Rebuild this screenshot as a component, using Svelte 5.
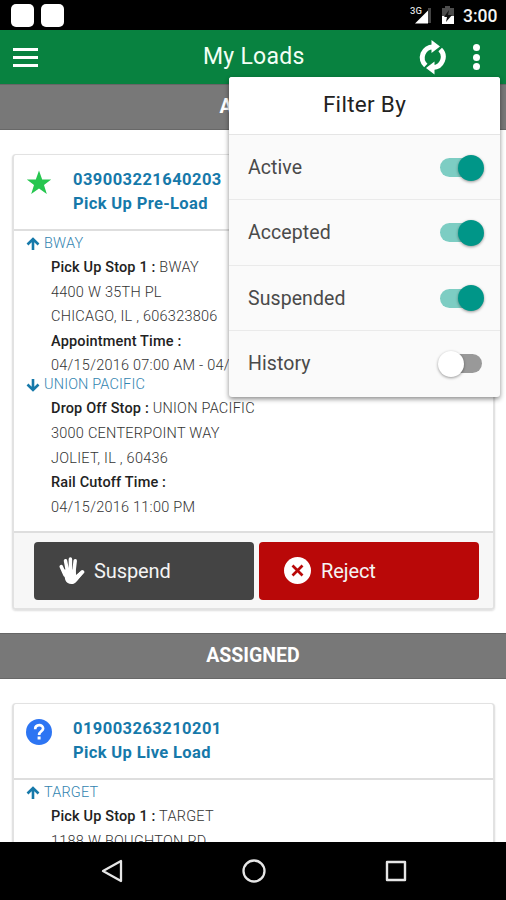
<script>
  const filters = [
    { label: 'Active', on: true },
    { label: 'Accepted', on: true },
    { label: 'Suspended', on: true },
    { label: 'History', on: false }
  ];
  const loads = [
    {
      section: 'ACTIVE', id: '039003221640203', kind: 'Pick Up Pre-Load', icon: 'star', actions: true,
      stops: [
        { dir: 'up', name: 'BWAY', lines: [['Pick Up Stop 1 :', 'BWAY'], ['', '4400 W 35TH PL'], ['', 'CHICAGO, IL , 606323806'], ['Appointment Time :', ''], ['', '04/15/2016 07:00 AM - 04/']] },
        { dir: 'down', name: 'UNION PACIFIC', lines: [['Drop Off Stop :', 'UNION PACIFIC'], ['', '3000 CENTERPOINT WAY'], ['', 'JOLIET, IL , 60436'], ['Rail Cutoff Time :', ''], ['', '04/15/2016 11:00 PM']] }
      ]
    },
    {
      section: 'ASSIGNED', id: '019003263210201', kind: 'Pick Up Live Load', icon: 'question', actions: false,
      stops: [
        { dir: 'up', name: 'TARGET', lines: [['Pick Up Stop 1 :', 'TARGET'], ['', '1188 W BOUGHTON RD']] }
      ]
    }
  ];
</script>

<div class="phone">
  <div class="status">
    <i class="notif"></i><i class="notif"></i>
    <svg class="signal" width="24" height="20" viewBox="0 0 24 20">
      <path d="M18 3h3v15h-3z" fill="#444" />
      <path d="M5 18.500 18 5.500v13z" fill="#fff" />
      <text x="0" y="8.500" font-size="9.500" font-weight="500" fill="#ddd">3G</text>
    </svg>
    <svg class="battery" width="14" height="20" viewBox="0 0 14 20">
      <path d="M1 3h3V1h5v2h4v8H1z" fill="#4d4d4d" />
      <path d="M1 11h12v8H1z" fill="#fff" />
      <path d="M8 5 3 12h3l-1 5 6-7H7z" fill="#111" />
    </svg>
    <span class="clock">3:00</span>
  </div>

  <header>
    <div class="burger"><i></i><i></i><i></i></div>
    <h1>My Loads</h1>
    <svg class="refresh" width="28" height="36" viewBox="0 0 28 36">
      <g fill="none" stroke="#fff" stroke-width="5">
        <path d="M6.800 26.500A10.600 10.600 0 0 1 14 8" />
        <path d="M21.200 10.500A10.600 10.600 0 0 1 14 28.500" />
      </g>
      <path d="M12.500 1 21 7.600 12.500 14z M15.500 22.500 7 29 15.500 35.500z" fill="#fff" />
    </svg>
    <div class="dots"><i></i><i></i><i></i></div>
  </header>

  <main>
    {#each loads as load}
      <h2>{load.section}</h2>
      <article>
        <div class="top">
          {#if load.icon === 'star'}
            <svg width="26" height="26" viewBox="0 0 26 26"><path d="M13 .5l3.200 9.100h9l-7.200 5.300 2.800 9.200L13 18.500l-7.800 5.600L8 14.900.8 9.600h9z" fill="#27c650" /></svg>
          {:else}
            <svg width="26" height="26" viewBox="0 0 26 26"><circle cx="13" cy="13" r="13" fill="#2d75f3" /><path d="M9.200 10.200C9.200 4.700 17.300 5 17.100 9.600 17 12.300 13.100 12.400 13.100 16" fill="none" stroke="#fff" stroke-width="2.700" /><path d="M11.600 17.500h3v3h-3z" fill="#fff" /></svg>
          {/if}
          <div class="title">
            <div class="num">{load.id}</div>
            <div class="kind">{load.kind}</div>
          </div>
        </div>
        <div class="body">
          {#each load.stops as stop}
            <div class="stop">
              <svg class:down={stop.dir === 'down'} width="14" height="14" viewBox="0 0 14 14"><path d="M7 13V3M1.500 7.500 7 2l5.500 5.500" fill="none" stroke="#1679aa" stroke-width="2.600" /></svg>
              <span>{stop.name}</span>
            </div>
            <div class="lines">
              {#each stop.lines as [strong, text]}
                <p>{#if strong}<b>{strong}</b>{/if}{#if strong && text}{' '}{/if}{text}</p>
              {/each}
            </div>
          {/each}
        </div>
        {#if load.actions}
          <div class="actions">
            <button class="suspend">
              <svg width="27" height="30" viewBox="0 0 27 30">
                <g fill="none" stroke="#fff" stroke-width="3.500" stroke-linecap="round"><path d="M3.200 10.500 7 19M7.500 4.700 9.800 17M12.400 3V17M17.200 4.800 15.800 17" /><path d="M24.300 16 18 23" stroke-width="4" /></g>
                <path d="M5 13.500h12.600l.5 5.500 4.100-3.500 2.500 2-5.700 7.500C16.500 29.500 9 29 7.300 24z" fill="#fff" />
              </svg>
              Suspend
            </button>
            <button class="reject">
              <svg width="27" height="27" viewBox="0 0 27 27"><circle cx="13.500" cy="13.500" r="13.500" fill="#fff" /><path d="m8.500 8.500 10 10m0-10-10 10" stroke="#b90808" stroke-width="2.700" /></svg>
              Reject
            </button>
          </div>
        {/if}
      </article>
    {/each}
  </main>

  <nav>
    <svg width="24" height="26" viewBox="0 0 24 26"><path d="M21 3v20L3 13z" fill="none" stroke="#e6e6e6" stroke-width="2.300" stroke-linejoin="round" /></svg>
    <svg width="26" height="26" viewBox="0 0 26 26"><circle cx="13" cy="13" r="10.500" fill="none" stroke="#e6e6e6" stroke-width="2.300" /></svg>
    <svg width="24" height="24" viewBox="0 0 24 24"><path d="M3 3h18v18H3z" fill="none" stroke="#e6e6e6" stroke-width="2.400" stroke-linejoin="round" /></svg>
  </nav>

  <div class="menu">
    <h3>Filter By</h3>
    {#each filters as f}
      <div class="row">
        <span>{f.label}</span>
        <div class="switch" class:on={f.on}><i></i></div>
      </div>
    {/each}
  </div>
</div>

<style>
  :global(body) { margin: 0; }
  * { box-sizing: border-box; }
  .phone { position: relative; width: 506px; height: 900px; overflow: hidden; display: flex; flex-direction: column; background: #fff; font-family: Roboto, sans-serif; color: #333; }
  .status { flex: none; height: 30px; background: #000; display: flex; align-items: center; padding-left: 11px; }
  .notif { width: 23px; height: 23px; border-radius: 5px; background: #fff; margin-right: 7px; }
  .signal { margin-left: auto; margin-right: 7px; overflow: visible; }
  .battery { margin-right: 8px; }
  .clock { width: 43px; color: #f4f4f4; font-size: 17.500px; font-weight: 500; line-height: 30px; padding-top: 2px; white-space: nowrap; }
  header { flex: none; height: 54px; background: #088240; display: flex; align-items: center; padding-left: 13px; }
  .burger { width: 25px; display: flex; flex-direction: column; gap: 5px; padding-top: 1px; }
  .burger i { height: 3px; background: #fff; }
  h1 { margin: 0 0 0 165px; width: 216px; color: #f2fff5; font-size: 23px; font-weight: 400; letter-spacing: .25px; line-height: 54px; }
  .refresh { margin-right: 26px; }
  .dots { display: flex; flex-direction: column; gap: 2.500px; }
  .dots i { width: 7px; height: 7px; border-radius: 50%; background: #fff; }
  main { height: 758px; flex: none; overflow: hidden; }
  h2 { margin: 0; height: 46px; background: #787878; border-top: 1px solid #666; border-bottom: 1px solid #686868; color: #fff; text-align: center; font-size: 19.500px; line-height: 44px; font-weight: 700; }
  article { margin: 24px 11px 23px 12px; border: 2px solid #e2e2e2; border-top-width: 1.500px; border-radius: 4px; box-shadow: 0 1px 2px #0002; overflow: hidden; }
  .top { height: 76px; border-bottom: 2px solid #dedede; padding: 13px 0 0 12px; display: flex; }
  .top svg { margin-top: 2px; }
  .title { margin-left: 21px; color: #1679aa; font-size: 16.500px; font-weight: 700; line-height: 24.300px; white-space: nowrap; }
  .num { letter-spacing: .45px; }
  .kind { letter-spacing: .36px; }
  .body { height: 299.500px; }
  .stop { display: flex; align-items: center; padding-left: 12px; height: 25px; color: #3284b0; font-size: 14.500px; font-weight: 300; letter-spacing: .15px; white-space: nowrap; }
  .stop svg { margin-right: 4px; }
  .stop svg.down { transform: rotate(180deg); }
  .lines { padding-left: 37px; margin-bottom: -6.500px; }
  p { margin: 0; height: 24.600px; line-height: 24.600px; font-size: 14.500px; font-weight: 300; letter-spacing: .24px; color: #333; white-space: nowrap; }
  b { font-weight: 500; color: #222; letter-spacing: .16px; }
  .actions { height: 77.500px; background: #f7f7f7; border-top: 2px solid #dedede; display: flex; gap: 5px; padding: 9px 14px 9px 20px; }
  button { border: 0; border-radius: 4px; width: 220px; height: 58px; padding: 0 0 0 24px; display: flex; align-items: center; font: 400 20px Roboto, sans-serif; color: #f4f4f4; letter-spacing: -.1px; }
  .suspend { background: #444; }
  .suspend svg { margin-right: 9px; }
  .reject { background: #b90808; }
  .reject svg { margin: 0 10px 0 1px; }
  nav { flex: none; height: 58px; background: #000; display: flex; align-items: center; padding: 0 0 0 100px; }
  nav svg:nth-child(2) { margin-left: 117px; }
  nav svg:nth-child(3) { margin-left: 117px; }
  .menu { position: absolute; left: 229px; top: 77px; width: 271px; height: 320px; background: #fafafa; border-radius: 3px; box-shadow: 0 2px 5px #0007; overflow: hidden; }
  h3 { margin: 0; height: 58px; background: #fff; border-bottom: 1px solid #e5e5e5; text-align: center; font-size: 22.500px; font-weight: 400; line-height: 54px; letter-spacing: .3px; color: #222; }
  .row { display: flex; align-items: center; justify-content: space-between; height: 65.300px; padding: 1px 16px 0 19px; border-bottom: 1px solid #eaeaea; font-size: 19.500px; color: #4a4a4a; letter-spacing: .08px; }
  .row:last-child { border-bottom: 0; padding-top: 0; }
  .switch { position: relative; width: 46px; height: 26px; display: flex; align-items: center; }
  .switch::before { content: ''; width: 42px; height: 19px; margin-left: 2px; border-radius: 10px; background: #999; }
  .switch i { position: absolute; left: 0; top: 0; width: 26px; height: 26px; border-radius: 50%; background: #fff; box-shadow: 0 1px 3px #0006; }
  .switch.on::before { background: #7dcdc3; }
  .switch.on i { left: 20px; background: #009688; }
</style>
